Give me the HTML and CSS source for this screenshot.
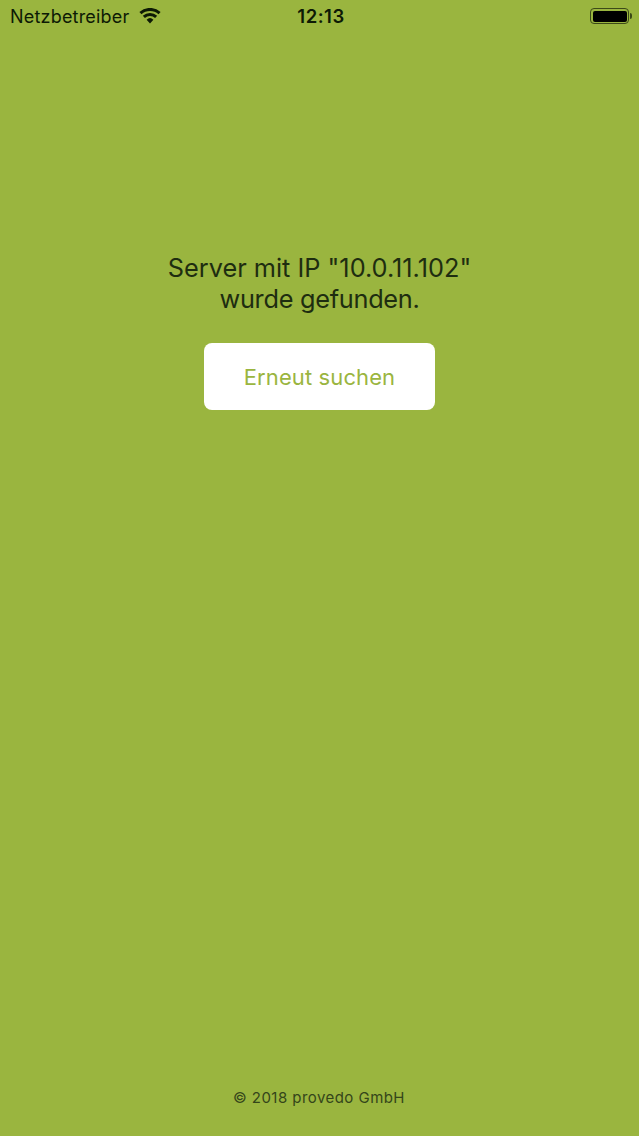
FILE: index.html
```html
<!DOCTYPE html>
<html lang="de">
<head>
<meta charset="utf-8">
<title>Server</title>
<link rel="stylesheet" href="styles.css">
</head>
<body>
<div class="screen">
  <header class="status">
    <div class="status-left">
      <span class="carrier">Netzbetreiber</span>
      <svg class="wifi" width="22" height="16" viewBox="0 0 22 16"><path d="M11 15.5 7.6 11.7a5 5 0 0 1 6.8 0Z M5.9 10 3.8 7.7a10.6 10.6 0 0 1 14.4 0L16.1 10a7.6 7.6 0 0 0-10.2 0Z M2.5 6.3.4 4a15.8 15.8 0 0 1 21.2 0l-2.1 2.3a12.7 12.7 0 0 0-17 0Z" fill="#0d1a05"/></svg>
    </div>
    <span class="time">12:13</span>
    <div class="status-right">
      <span class="battery"><span class="battery-fill"></span></span>
      <span class="battery-cap"></span>
    </div>
  </header>
  <main class="content">
    <p class="message">Server mit IP "10.0.11.102"<br><span class="message-second">wurde gefunden.</span></p>
    <button class="retry">Erneut suchen</button>
  </main>
  <footer class="footer">© 2018 provedo GmbH</footer>
</div>
</body>
</html>
```
FILE: styles.css
```css
* { box-sizing: border-box; }
html, body { margin: 0; height: 100%; }
body { background: #9ab53f; font-family: Inter, "Liberation Sans", sans-serif; }
.screen { height: 1136px; display: flex; flex-direction: column; overflow: hidden; }
.status {
  height: 33px; padding: 0 7px 1px 10px;
  display: grid; grid-template-columns: 1fr auto 1fr; align-items: center;
  color: #0d1a05;
}
.status-left { display: flex; align-items: center; gap: 9px; }
.carrier { font-size: 18px; letter-spacing: 0.2px; }
.time { font-size: 18.5px; font-weight: 600; letter-spacing: 0.5px; }
.status-right { display: flex; align-items: center; justify-content: flex-end; }
.battery { width: 39px; height: 16px; border: 1.5px solid #3c4a18; border-radius: 4px; padding: 1.5px; display: flex; }
.battery-fill { flex: 1; background: #000; border-radius: 2px; }
.battery-cap { width: 2px; height: 6px; background: #3c4a18; border-radius: 0 2px 2px 0; margin-left: 1px; }
.content { display: flex; flex-direction: column; align-items: center; padding-top: 219px; flex: 1; }
.message { margin: 0; font-size: 25.3px; line-height: 31px; text-align: center; color: #1e2d10; }
.message-second { letter-spacing: -0.27px; }
.retry {
  margin-top: 29px; width: 231px; height: 67px; border: 0; border-radius: 8px;
  background: #fff; color: #9ab53f; font: 22px Inter, "Liberation Sans", sans-serif; letter-spacing: 0.1px;
}
.footer { text-align: center; font-size: 15px; line-height: 20px; letter-spacing: 0.45px; color: #34451a; padding: 0 1px 28px 0; }
```
